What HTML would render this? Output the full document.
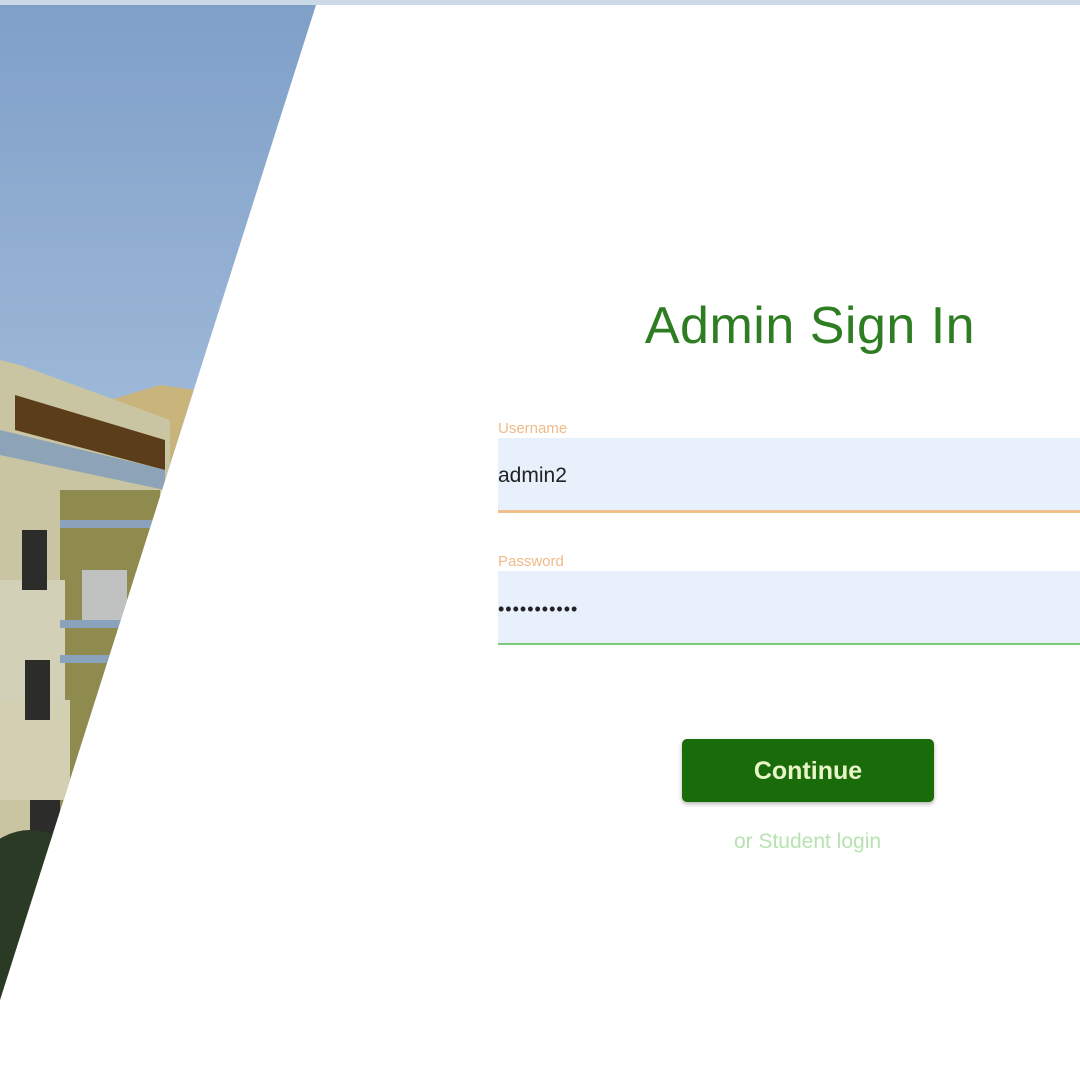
<!DOCTYPE html>
<html><head><meta charset="utf-8"><style>
html,body{margin:0;padding:0;width:1080px;height:1080px;overflow:hidden;background:#fff;font-family:"Liberation Sans",sans-serif}
.top{position:absolute;left:0;top:0;width:1080px;height:5px;background:#cbd9e6}
svg{position:absolute;left:0;top:0}
h1{position:absolute;left:560px;top:296px;width:500px;text-align:center;margin:0;font-weight:normal;font-size:52px;color:#2e7d22;letter-spacing:0.5px}
.lbl{position:absolute;left:498px;font-size:15px;color:#f0b98a}
.inp{position:absolute;left:498px;width:582px;height:72px;background:#e8f0fc;font-size:21px;color:#222;line-height:76px}
.btn{position:absolute;left:682px;top:739px;width:252px;height:63px;background:#1a6b0a;border-radius:5px;color:#e8f5c8;font-size:25px;font-weight:bold;text-align:center;line-height:64px;box-shadow:0 2px 4px rgba(0,0,0,.3)}
.alt{position:absolute;left:660px;top:830px;width:295px;text-align:center;font-size:21px;color:#b6e3b0}
</style></head><body>
<svg width="1080" height="1080">
<defs>
<clipPath id="c"><polygon points="0,5 316,5 0,1000"/></clipPath>
<linearGradient id="sky" x1="0" y1="0" x2="0" y2="1"><stop offset="0" stop-color="#7f9fc8"/><stop offset="0.5" stop-color="#a4bedb"/><stop offset="1" stop-color="#b4c8de"/></linearGradient>
</defs>
<g clip-path="url(#c)">
<rect width="330" height="1000" fill="url(#sky)"/>
<polygon points="110,400 160,385 195,390 195,600 110,600" fill="#c9b57c"/>
<polygon points="0,360 20,365 170,420 170,1000 0,1000" fill="#c9c5a2"/>
<polygon points="15,395 165,440 165,470 15,430" fill="#5b3d1a"/>
<polygon points="0,430 165,470 165,490 0,455" fill="#8da3b8"/>
<rect x="60" y="490" width="100" height="340" fill="#8f8a4e"/>
<rect x="0" y="580" width="65" height="120" fill="#d3d0b8"/>
<rect x="0" y="700" width="70" height="100" fill="#d2cfb2"/>
<rect x="22" y="530" width="25" height="60" fill="#2c2c2a"/>
<rect x="25" y="660" width="25" height="60" fill="#2c2c2a"/>
<rect x="30" y="800" width="30" height="40" fill="#2c2c2a"/>
<rect x="82" y="570" width="45" height="55" fill="#bfc2c0"/>
<rect x="60" y="520" width="100" height="8" fill="#8aa2bb"/>
<rect x="60" y="620" width="100" height="8" fill="#8aa2bb"/>
<rect x="60" y="655" width="100" height="8" fill="#8aa2bb"/>
<ellipse cx="30" cy="920" rx="70" ry="90" fill="#2a3a24"/>
</g>
</svg>
<div class="top"></div>
<h1>Admin Sign In</h1>
<div class="lbl" style="top:420px">Username</div>
<div class="inp" style="top:438px;border-bottom:3px solid #f0c08a">admin2</div>
<div class="lbl" style="top:553px">Password</div>
<div class="inp" style="top:571px;border-bottom:2px solid #7ccb7a;letter-spacing:1px;font-size:18px">•••••••••••</div>
<div class="btn">Continue</div>
<div class="alt">or Student login</div>
</body></html>
